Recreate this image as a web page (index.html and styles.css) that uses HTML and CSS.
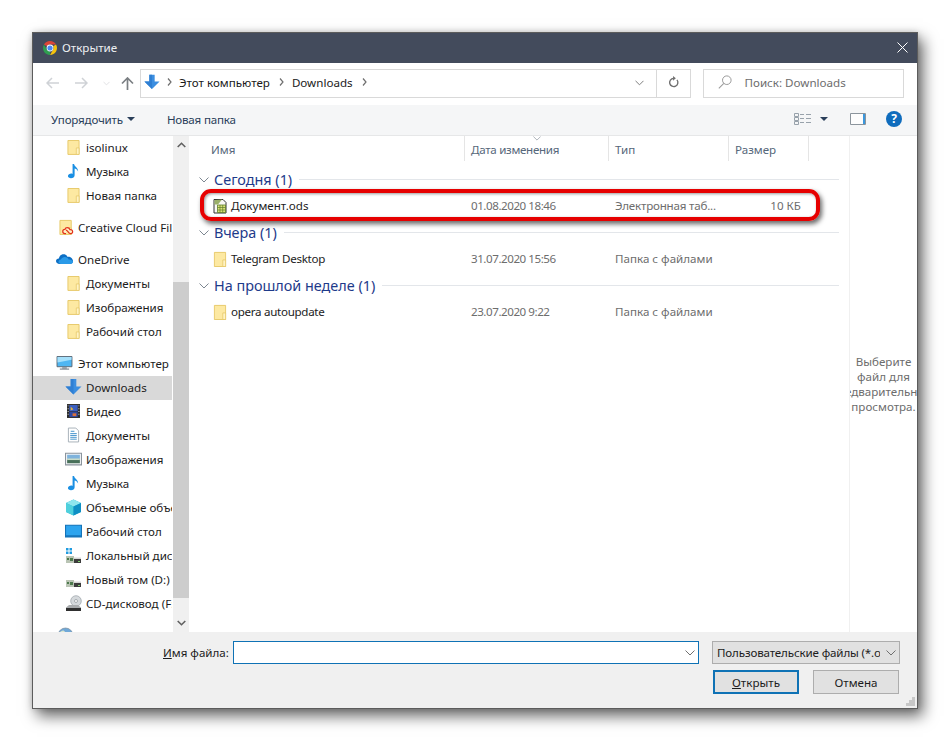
FILE: index.html
```html
<!DOCTYPE html>
<html lang="ru">
<head>
<meta charset="utf-8">
<title>Открытие</title>
<link rel="stylesheet" href="styles.css">
</head>
<body>
<svg class="defs" width="0" height="0" aria-hidden="true">
  <symbol id="folder" viewBox="0 0 14 17">
    <path d="M1 1.500h12v15H1z" fill="#fde9a2" stroke="#e6c766"/>
    <path d="M10 9.500h3v7h-3z" fill="#fff3c4" stroke="#e6c766" stroke-width=".8"/>
  </symbol>
  <symbol id="note" viewBox="0 0 14 17">
    <path d="M6 1h1.600c.4 3 4.400 3.600 4.400 8-1-2.200-2.600-3-3.800-3.200V13c0 2-1.800 3.300-3.900 3.300C2.500 16.300 1 15.400 1 14c0-1.700 2-2.700 3.400-2.700.6 0 1.200.1 1.600.3z" fill="#1a8fe3"/>
  </symbol>
  <symbol id="dl" viewBox="0 0 18 17">
    <path d="M6 0h6v8h5.500L9 16.500.5 8H6z" fill="#3c8ee0"/>
    <path d="M6 0h3v16.500L.5 8H6z" fill="#2f7fd3"/>
  </symbol>
  <symbol id="chev" viewBox="0 0 10 6">
    <path d="M.5.500 5 5 9.500.5" fill="none" stroke="currentColor" stroke-width="1"/>
  </symbol>
  <symbol id="drive" viewBox="0 0 17 17">
    <path d="M1 9h8v7H1z" fill="#b9c4b4"/>
    <path d="M2 11h2v2H2zm3 0h3v3H5z" fill="#4d7a4d"/>
    <path d="M9 11.500h7V16H9z" fill="#3c3c3c"/>
    <path d="M9 10.500h7v1.500H9z" fill="#d6d6d6"/>
    <path d="M13 14h2v1h-2z" fill="#7fd06f"/>
  </symbol>
</svg>

<main class="dialog">
  <header class="titlebar">
    <svg class="ic-chrome" viewBox="0 0 16 16">
      <path d="M8 1a7 7 0 0 1 6.060 3.500H8a3.500 3.500 0 0 0-3.030 1.750L1.940 4.500A7 7 0 0 1 8 1z" fill="#db4437"/>
      <path d="M14.060 4.500A7 7 0 0 1 8 15l3.030-5.250a3.500 3.500 0 0 0 0-3.500z" fill="#f4c20d" transform="translate(0 -.1)"/>
      <path d="M1.940 4.500 4.970 9.750A3.500 3.500 0 0 0 8 11.500L8 15A7 7 0 0 1 1.940 4.500z" fill="#2f9e50"/>
      <circle cx="8" cy="8" r="3.400" fill="#fff"/>
      <circle cx="8" cy="8" r="2.600" fill="#4a8af4"/>
    </svg>
    <span class="title-text">Открытие</span>
    <svg class="ic-close" viewBox="0 0 11 11"><path d="M.5.500l10 10M10.500.5l-10 10" stroke="#fff" stroke-width="1" fill="none"/></svg>
  </header>

  <nav class="addressrow">
    <svg class="ic-nav" viewBox="0 0 13 12"><path d="M6 1 1 6l5 5M1 6h12" fill="none" stroke="#cfd2d6" stroke-width="1.500"/></svg>
    <svg class="ic-nav ic-fwd" viewBox="0 0 13 12"><path d="m7 1 5 5-5 5m5-5H0" fill="none" stroke="#cfd2d6" stroke-width="1.500"/></svg>
    <svg class="ic-recent" viewBox="0 0 10 6"><use href="#chev"/></svg>
    <svg class="ic-up" viewBox="0 0 13 13"><path d="M1 6.500 6.500 1 12 6.500M6.500 1v12" fill="none" stroke="#7b7f83" stroke-width="1.700"/></svg>
    <div class="address">
      <svg class="ic-addr" viewBox="0 0 18 17"><use href="#dl"/></svg>
      <svg class="crumb-sep" viewBox="0 0 5 8"><path d="m1 .5 3 3.500-3 3.500" fill="none" stroke="#6f6f6f" stroke-width="1.200"/></svg>
      <span class="crumb">Этот компьютер</span>
      <svg class="crumb-sep" viewBox="0 0 5 8"><path d="m1 .5 3 3.500-3 3.500" fill="none" stroke="#6f6f6f" stroke-width="1.200"/></svg>
      <span class="crumb">Downloads</span>
      <svg class="crumb-sep" viewBox="0 0 5 8"><path d="m1 .5 3 3.500-3 3.500" fill="none" stroke="#6f6f6f" stroke-width="1.200"/></svg>
      <span class="address-fill"></span>
      <span class="addr-drop"><svg class="ic-addr-chev" viewBox="0 0 10 6"><use href="#chev"/></svg></span>
      <span class="addr-refresh">
        <svg class="ic-refresh" viewBox="0 0 12 13"><path d="M9.800 4.200A4.500 4.500 0 1 1 6 2.500" fill="none" stroke="#6f6f6f" stroke-width="1.500"/><path d="M5.500 0v5l3-2.500z" fill="#6f6f6f"/></svg>
      </span>
    </div>
    <div class="search">
      <svg class="ic-search" viewBox="0 0 14 14"><circle cx="8.800" cy="5.200" r="4.300" fill="none" stroke="#9a9a9a"/><path d="M5.800 8.300 .8 13.300" stroke="#9a9a9a" stroke-width="1.100"/></svg>
      <span>Поиск: Downloads</span>
    </div>
  </nav>

  <div class="toolbar">
    <span class="tool">Упорядочить</span>
    <span class="tri tri-org"></span>
    <span class="tool tool-new">Новая папка</span>
    <span class="toolbar-fill"></span>
    <svg class="ic-views" viewBox="0 0 17 12">
      <path d="M.5.500h4v3h-4zM.5 4.500h4v3h-4zM.5 8.500h4v3h-4z" fill="none" stroke="#98a2ab"/>
      <path d="M6 1.500h4M12 1.500h5M6 5.500h4M12 5.500h5M6 9.500h4M12 9.500h5" stroke="#98a2ab"/>
    </svg>
    <span class="tri tri-views"></span>
    <svg class="ic-pane" viewBox="0 0 16 12"><path d="M.5.500h15v11H.5z" fill="#fdfdfd" stroke="#8b949c"/><path d="M13 1h2v10h-2z" fill="#3b97dd"/></svg>
    <svg class="ic-help" viewBox="0 0 16 16"><circle cx="8" cy="8" r="8" fill="#0f6cbd"/><text class="help-q" x="8" y="12.200" text-anchor="middle">?</text></svg>
  </div>

  <div class="body">
    <aside class="sidebar">
      <ul class="tree">
        <li class="node child"><svg class="ic" viewBox="0 0 14 17"><use href="#folder"/></svg><span>isolinux</span></li>
        <li class="node child"><svg class="ic" viewBox="0 0 14 17"><use href="#note"/></svg><span>Музыка</span></li>
        <li class="node child"><svg class="ic" viewBox="0 0 14 17"><use href="#folder"/></svg><span>Новая папка</span></li>
      </ul>
      <ul class="tree">
        <li class="node root">
          <svg class="ic ic-cc" viewBox="0 0 17 17"><use href="#folder" width="14" height="17"/><path d="M7.500 15.500H6.300C4.900 15.500 4 14.500 4 13.300s1-2.200 2.200-2.200c.4-1.200 1.400-1.900 2.600-1.900 1.400 0 2.500.9 2.800 2.100 1.500-.2 2.900.8 2.900 2.200 0 1.200-1 2-2.200 2-2.200 0-2.900-3.700-5-3.700" fill="#fff2c8" stroke="#e3311b" stroke-width="1.300"/></svg>
          <span>Creative Cloud Files</span>
        </li>
      </ul>
      <ul class="tree">
        <li class="node root">
          <svg class="ic ic-wide" viewBox="0 0 17 11"><path d="M3.500 10.500C1.500 10.500 0 9.300 0 7.600 0 6 1.200 5 2.800 4.900 3.400 2.300 5.300.7 7.500.7c1.900 0 3.400 1 4.100 2.700 2.900-.3 5.400 1.700 5.400 4.300 0 1.600-1.300 2.800-3 2.800z" fill="#0d6fc4"/><path d="M5 10.500c-1.500 0-2.500-1-2.500-2.200 0-1.300 1-2.200 2.400-2.300C5.600 4.500 7 3.500 8.800 3.500c1.800 0 3.300 1 3.800 2.500 2.300-.2 4.400.9 4.400 2.300 0 1.300-1.300 2.200-3 2.200z" fill="#2a9ae8"/></svg>
          <span>OneDrive</span>
        </li>
        <li class="node child"><svg class="ic" viewBox="0 0 14 17"><use href="#folder"/></svg><span>Документы</span></li>
        <li class="node child"><svg class="ic" viewBox="0 0 14 17"><use href="#folder"/></svg><span>Изображения</span></li>
        <li class="node child"><svg class="ic" viewBox="0 0 14 17"><use href="#folder"/></svg><span>Рабочий стол</span></li>
      </ul>
      <ul class="tree">
        <li class="node root">
          <svg class="ic ic-wide" viewBox="0 0 17 15"><path d="M.5.500h16v11H.5z" fill="#4fb6f2" stroke="#5a6570"/><path d="M1 1h15v3L1 7z" fill="#a5e0fb"/><path d="M6 12h5v1.500H6z" fill="#8a949c"/><path d="M3.500 13.500h10v1h-10z" fill="#5a6570"/></svg>
          <span>Этот компьютер</span>
        </li>
        <li class="node child selected"><svg class="ic ic-dl" viewBox="0 0 18 17"><use href="#dl"/></svg><span>Downloads</span></li>
        <li class="node child">
          <svg class="ic" viewBox="0 0 14 15"><path d="M0 0h14v15H0z" fill="#2b2b2b"/><path d="M2.500 1h9v6.500h-9z" fill="#3b5fc0"/><path d="M2.500 8h9v6h-9z" fill="#2f49a3"/><path d="M4 3l3 2.500L4 7z" fill="#e3b13c"/><path d="M6 10h4v3H6z" fill="#d9713a"/><path d="M.7 1.500h1v1h-1zM.7 4.500h1v1h-1zM.7 7.500h1v1h-1zM.7 10.500h1v1h-1zM12.300 1.500h1v1h-1zM12.300 4.500h1v1h-1zM12.300 7.500h1v1h-1zM12.300 10.500h1v1h-1z" fill="#ddd"/></svg>
          <span>Видео</span>
        </li>
        <li class="node child">
          <svg class="ic" viewBox="0 0 14 16"><path d="M1.500.5h8l3 3v12h-11z" fill="#fff" stroke="#a3adb6"/><path d="M4 4h4M3.500 6.500h7M3.500 8.500h7M3.500 10.500h7M3.500 12.500h7" stroke="#3c8fc9"/></svg>
          <span>Документы</span>
        </li>
        <li class="node child">
          <svg class="ic ic-wide" viewBox="0 0 16 12"><path d="M.5.500h15v11H.5z" fill="#f4f6f8" stroke="#8a949c"/><path d="M2 2h12v4H2z" fill="#7fb3dc"/><path d="M2 6h12v4H2z" fill="#48705a"/><path d="M2 5.500h12v1.500H2z" fill="#c9dcc9"/></svg>
          <span>Изображения</span>
        </li>
        <li class="node child"><svg class="ic" viewBox="0 0 14 17"><use href="#note"/></svg><span>Музыка</span></li>
        <li class="node child">
          <svg class="ic ic-box" viewBox="0 0 17 17"><path d="M8.500.5 16 4v9l-7.500 3.500L1 13V4z" fill="#22b5d6"/><path d="M8.500.5 16 4 8.500 7.500 1 4z" fill="#8fe6ee"/><path d="M1 4l7.500 3.500v9L1 13z" fill="#4fd0dc"/><path d="M8.500 7.500 16 4v9l-7.500 3.500z" fill="#0f8fc4"/></svg>
          <span>Объемные объекты</span>
        </li>
        <li class="node child">
          <svg class="ic ic-wide" viewBox="0 0 16 12"><path d="M.5.500h15v11H.5z" fill="#2da4ee" stroke="#1473b8"/><path d="M1 10h14v1.500H1z" fill="#1473b8"/></svg>
          <span>Рабочий стол</span>
        </li>
        <li class="node child">
          <svg class="ic ic-box" viewBox="0 0 17 17"><use href="#drive"/><path d="M1 1h2.500v2.500H1zM4.500 1H7v2.500H4.500zM1 4.500h2.500V7H1zM4.500 4.500H7V7H4.500z" fill="#1f9be0"/></svg>
          <span>Локальный диск (C:)</span>
        </li>
        <li class="node child"><svg class="ic ic-box" viewBox="0 0 17 17"><use href="#drive"/></svg><span>Новый том (D:)</span></li>
        <li class="node child">
          <svg class="ic ic-box" viewBox="0 0 17 17"><circle cx="11" cy="6" r="5.300" fill="#d5d9dc" stroke="#9aa1a6" stroke-width=".7"/><circle cx="11" cy="6" r="1.500" fill="#fff" stroke="#8d9398" stroke-width=".7"/><path d="M1 12.500 4 10h9l3 2.500V16H1z" fill="#a9acae"/><path d="M1 13h15v3H1z" fill="#2f2f2f"/></svg>
          <span>CD-дисковод (F:)</span>
        </li>
      </ul>
      <ul class="tree">
        <li class="node root">
          <svg class="ic ic-box" viewBox="0 0 17 17"><circle cx="8.500" cy="8.500" r="7.500" fill="#6fa8d8" stroke="#7e8e9c" stroke-width=".7"/><path d="M3 5c2-2 4-2 5 0s-2 2-2 4-3 0-3-4z" fill="#d9e6d0"/></svg>
          <span>Сеть</span>
        </li>
      </ul>
    </aside>

    <div class="scrollbar">
      <svg class="sb-arrow" viewBox="0 0 9 6"><path d="M.7 5 4.500 1.300 8.300 5" fill="none" stroke="#606060" stroke-width="1.600"/></svg>
      <span class="sb-thumb"></span>
      <svg class="sb-arrow sb-down" viewBox="0 0 9 6"><path d="M.7 1 4.500 4.700 8.300 1" fill="none" stroke="#606060" stroke-width="1.600"/></svg>
    </div>

    <section class="files">
      <div class="cols">
        <span class="col">Имя</span>
        <span class="col col-date">Дата изменения<svg class="sort" viewBox="0 0 10 6"><use href="#chev"/></svg></span>
        <span class="col">Тип</span>
        <span class="col">Размер</span>
      </div>

      <div class="group">
        <svg class="g-chev" viewBox="0 0 10 6"><use href="#chev"/></svg>
        <span class="g-name">Сегодня (1)</span><span class="g-line"></span>
      </div>
      <div class="row marked">
        <span class="name">
          <svg class="ic-file" viewBox="0 0 14 15"><path d="M1 1h9l3 3v10.500H1z" fill="#f8f8f4" stroke="#333"/><path d="M1.500 1.500 9 1 5 6H1.500z" fill="#9bb06a"/><path d="M4.500 6.500h8v7.500h-8z" fill="#dbe27a" stroke="#5d7d2a" stroke-width=".8"/><path d="M4.500 9h8M4.500 11.500h8M7 6.500v7.500M9.700 6.500v7.500" stroke="#5d7d2a" stroke-width=".7"/></svg>
          <span class="fname">Документ.ods</span>
        </span>
        <span class="meta date">01.08.2020 18:46</span>
        <span class="meta kind">Электронная таб...</span>
        <span class="meta size">10 КБ</span>
        <span class="annotation"></span>
      </div>

      <div class="group">
        <svg class="g-chev" viewBox="0 0 10 6"><use href="#chev"/></svg>
        <span class="g-name">Вчера (1)</span><span class="g-line"></span>
      </div>
      <div class="row">
        <span class="name">
          <svg class="ic-file" viewBox="0 0 14 17"><use href="#folder"/></svg>
          <span class="fname fname-latin">Telegram Desktop</span>
        </span>
        <span class="meta date">31.07.2020 15:56</span>
        <span class="meta">Папка с файлами</span>
        <span class="meta size"></span>
      </div>

      <div class="group">
        <svg class="g-chev" viewBox="0 0 10 6"><use href="#chev"/></svg>
        <span class="g-name">На прошлой неделе (1)</span><span class="g-line"></span>
      </div>
      <div class="row">
        <span class="name">
          <svg class="ic-file" viewBox="0 0 14 17"><use href="#folder"/></svg>
          <span class="fname fname-latin">opera autoupdate</span>
        </span>
        <span class="meta date">23.07.2020 9:22</span>
        <span class="meta">Папка с файлами</span>
        <span class="meta size"></span>
      </div>
    </section>

    <aside class="preview">
      <span>Выберите</span>
      <span>файл для</span>
      <span>предварительного</span>
      <span>просмотра.</span>
    </aside>
  </div>

  <footer class="footer">
    <div class="f-row">
      <label class="f-label"><u>И</u>мя файла:</label>
      <div class="f-input"><svg class="f-chev" viewBox="0 0 10 6"><use href="#chev"/></svg></div>
      <div class="f-select"><span class="f-sel-text">Пользовательские файлы (*.ods)</span><svg class="f-chev" viewBox="0 0 10 6"><use href="#chev"/></svg></div>
    </div>
    <div class="f-buttons">
      <button class="btn btn-primary"><u>О</u>ткрыть</button>
      <button class="btn">Отмена</button>
    </div>
    <svg class="grip" viewBox="0 0 9 9"><path d="M6 0h3v3H6zM3 3h3v3H3zM6 3h3v3H6zM0 6h3v3H0zM3 6h3v3H3zM6 6h3v3H6z" fill="#c8c8c8"/></svg>
  </footer>
</main>
</body>
</html>
```

FILE: styles.css
```css
* { box-sizing: border-box; }
html, body { margin: 0; padding: 0; }
body {
  width: 950px;
  height: 741px;
  overflow: hidden;
  background: #fff;
  font-family: "Noto Sans", "Open Sans", sans-serif;
  font-size: 11.6px;
  color: #1c1c1c;
}
.defs { position: absolute; }
svg { display: block; flex: none; }

.dialog {
  margin: 32px 0 0 32px;
  width: 886px;
  height: 677px;
  display: flex;
  flex-direction: column;
  background: #fff;
  border: 1px solid #5c5c5c;
  box-shadow: 5px 7px 14px rgba(0, 0, 0, .6), 0 0 6px rgba(0, 0, 0, .15);
}

/* title bar */
.titlebar {
  height: 30px;
  flex: none;
  display: flex;
  align-items: center;
  padding: 0 9px 1px 9px;
  background: #434b5c;
  color: #eef0f3;
}
.ic-chrome { width: 16px; height: 16px; }
.title-text { margin-left: 4px; flex: 1; }
.ic-close { width: 11px; height: 11px; margin-top: -1px; }

/* address row */
.addressrow {
  height: 42px;
  flex: none;
  display: flex;
  align-items: center;
  padding: 0 13px 2px 13px;
  background: #fff;
}
.ic-nav { width: 13px; height: 12px; }
.ic-fwd { margin-left: 16px; }
.ic-recent { width: 7px; height: 5px; margin-left: 15px; color: #d4d6d9; }
.ic-up { width: 13px; height: 13px; margin-left: 11px; }
.address {
  width: 552px;
  height: 29px;
  margin-left: 6px;
  display: flex;
  align-items: center;
  padding: 0 0 2px 3px;
  border: 1px solid #d9d9d9;
}
.ic-addr { width: 16px; height: 16px; }
.crumb-sep { width: 5px; height: 8px; margin-left: 7px; }
.crumb { margin-left: 7px; color: #1a1a1a; }
.crumb + .crumb-sep { margin-left: 9px; }
.crumb + .crumb-sep + .crumb { margin-left: 8px; }
.address-fill { flex: 1; }
.addr-drop {
  width: 33px;
  align-self: stretch;
  margin-bottom: -2px;
  display: flex;
  align-items: center;
  justify-content: center;
  color: #6f6f6f;
  border-right: 1px solid #d9d9d9;
}
.ic-addr-chev { width: 9px; height: 6px; }
.addr-refresh {
  width: 33px;
  display: flex;
  align-items: center;
  justify-content: center;
}
.ic-refresh { width: 11px; height: 12px; }
.search {
  width: 202px;
  height: 29px;
  margin-left: 12px;
  display: flex;
  align-items: center;
  padding: 0 0 2px 14px;
  border: 1px solid #d9d9d9;
  color: #6d6d6d;
}
.ic-search { width: 14px; height: 14px; margin-right: 13px; }

/* toolbar */
.toolbar {
  height: 31px;
  flex: none;
  display: flex;
  align-items: center;
  padding: 0 15px 2px 18px;
  background: #f5f6f7;
  border-bottom: 1px solid #e6e7e8;
  color: #2a3f5a;
}
.tool { letter-spacing: -.2px; }
.tool-new { margin-left: 32px; }
.tri {
  width: 0;
  height: 0;
  border-left: 4px solid transparent;
  border-right: 4px solid transparent;
  border-top: 4px solid #2a3f5a;
}
.tri-org { margin-left: 4px; }
.toolbar-fill { flex: 1; }
.ic-views { width: 17px; height: 12px; }
.tri-views { margin-left: 9px; }
.ic-pane { width: 16px; height: 12px; margin-left: 22px; }
.ic-help { width: 16px; height: 16px; margin-left: 20px; }
.help-q { font-size: 12px; font-weight: 700; fill: #fff; }

/* body */
.body {
  flex: 1;
  min-height: 0;
  display: flex;
  background: #fff;
}
.sidebar {
  width: 139px;
  flex: none;
  overflow: hidden;
}
.tree {
  list-style: none;
  margin: 0 0 8px;
  padding: 0;
}
.node {
  height: 24px;
  display: flex;
  align-items: center;
  white-space: nowrap;
  padding-bottom: 2px;
}
.node.child { padding-left: 34px; }
.node.root { padding-left: 26px; }
.node.selected { background: #d9d9d9; }
.ic {
  width: 13px;
  height: 16px;
  margin-right: 6px;
}
.ic-wide { width: 17px; height: 14px; margin-left: -2px; margin-right: 4px; }
.node.root .ic { margin-right: 6px; }
.ic-dl { width: 17px; height: 16px; margin-left: -2px; margin-right: 4px; }
.ic-box { width: 17px; height: 17px; margin-left: -2px; margin-right: 4px; }
.node.root .ic-wide { margin-left: -3px; margin-right: 5px; }
.node.root .ic-cc { width: 16px; height: 16px; margin-right: 3px; }

.scrollbar {
  width: 16px;
  margin-left: 1px;
  flex: none;
  display: flex;
  flex-direction: column;
  align-items: center;
  background: #f0f0f0;
}
.sb-arrow { width: 9px; height: 6px; margin-top: 6px; }
.sb-thumb {
  align-self: stretch;
  height: 316px;
  margin-top: 134px;
  background: #cdcdcd;
}
.sb-down { margin-top: 22px; }

/* file list */
.files {
  width: 659px;
  margin-left: 1px;
  flex: none;
}
.cols {
  height: 30px;
  display: grid;
  grid-template-columns: 275px 144px 120px 80px;
  color: #56677a;
}
.col {
  position: relative;
  height: 25px;
  padding: 6px 0 0 6px;
  border-right: 1px solid #e5e5e5;
}
.col:first-child { padding-left: 21px; }
.col-date { letter-spacing: -.3px; }
.sort {
  position: absolute;
  left: 68px;
  top: 0;
  width: 8px;
  height: 5px;
  color: #9aa2aa;
}
.group {
  height: 27px;
  display: flex;
  align-items: center;
  padding-left: 9px;
  color: #1e3a8a;
  width: 649px;
}
.g-chev { width: 10px; height: 6px; color: #7d8791; }
.g-name { margin-left: 5px; font-size: 14.4px; white-space: nowrap; }
.g-line { flex: 1; height: 1px; margin-left: 7px; background: #e3e6ea; }
.row {
  position: relative;
  height: 26px;
  display: grid;
  grid-template-columns: 275px 144px 120px 80px;
  align-items: center;
  padding-bottom: 1px;
}
.name { display: flex; align-items: center; padding-left: 23px; }
.ic-file { width: 14px; height: 16px; }
.fname { margin-left: 4px; color: #1c1c1c; }
.fname-latin { letter-spacing: -.3px; }
.meta { padding-left: 6px; color: #6d6d6d; white-space: nowrap; }
.date { letter-spacing: -.45px; }
.kind { letter-spacing: -.2px; }
.size { text-align: right; padding: 0 8px 0 0; }
.annotation {
  position: absolute;
  left: 10px;
  top: -4px;
  width: 620px;
  height: 32px;
  border: 4px solid #e60000;
  border-radius: 11px;
  box-shadow: 2px 3px 5px rgba(0, 0, 0, .6), inset 1px 1px 3px rgba(0, 0, 0, .4);
}

/* preview pane */
.preview {
  flex: 1;
  min-width: 0;
  overflow: hidden;
  border-left: 1px solid #f0f0f0;
  display: flex;
  flex-direction: column;
  align-items: center;
  justify-content: center;
  padding-bottom: 1px;
  line-height: 15px;
  color: #6d6d6d;
  white-space: nowrap;
}

/* footer */
.footer {
  position: relative;
  height: 76px;
  flex: none;
  padding-top: 9px;
  background: #f0f0f0;
}
.f-row {
  display: flex;
  align-items: center;
  height: 23px;
  padding-left: 130px;
}
.f-label { width: 70px; }
.f-input {
  width: 466px;
  height: 23px;
  display: flex;
  align-items: center;
  justify-content: flex-end;
  padding-right: 3px;
  background: #fff;
  border: 1px solid #0f72b5;
  color: #6f6f6f;
}
.f-chev { width: 10px; height: 6px; }
.f-select {
  width: 188px;
  height: 23px;
  margin-left: 13px;
  display: flex;
  align-items: center;
  justify-content: space-between;
  padding: 0 3px 0 4px;
  overflow: hidden;
  background: #e1e1e1;
  border: 1px solid #adadad;
  color: #6f6f6f;
}
.f-sel-text {
  color: #1c1c1c;
  width: 163px;
  overflow: hidden;
  white-space: nowrap;
  letter-spacing: -.15px;
}
.f-buttons {
  display: flex;
  gap: 14px;
  margin: 6px 0 0 680px;
}
.btn {
  width: 86px;
  height: 24px;
  padding: 1px 0 0;
  font: inherit;
  color: #1c1c1c;
  background: #e1e1e1;
  border: 1px solid #adadad;
}
.btn-primary { border: 2px solid #0f72b5; }
.grip {
  position: absolute;
  right: 2px;
  bottom: 2px;
  width: 9px;
  height: 9px;
}
```
